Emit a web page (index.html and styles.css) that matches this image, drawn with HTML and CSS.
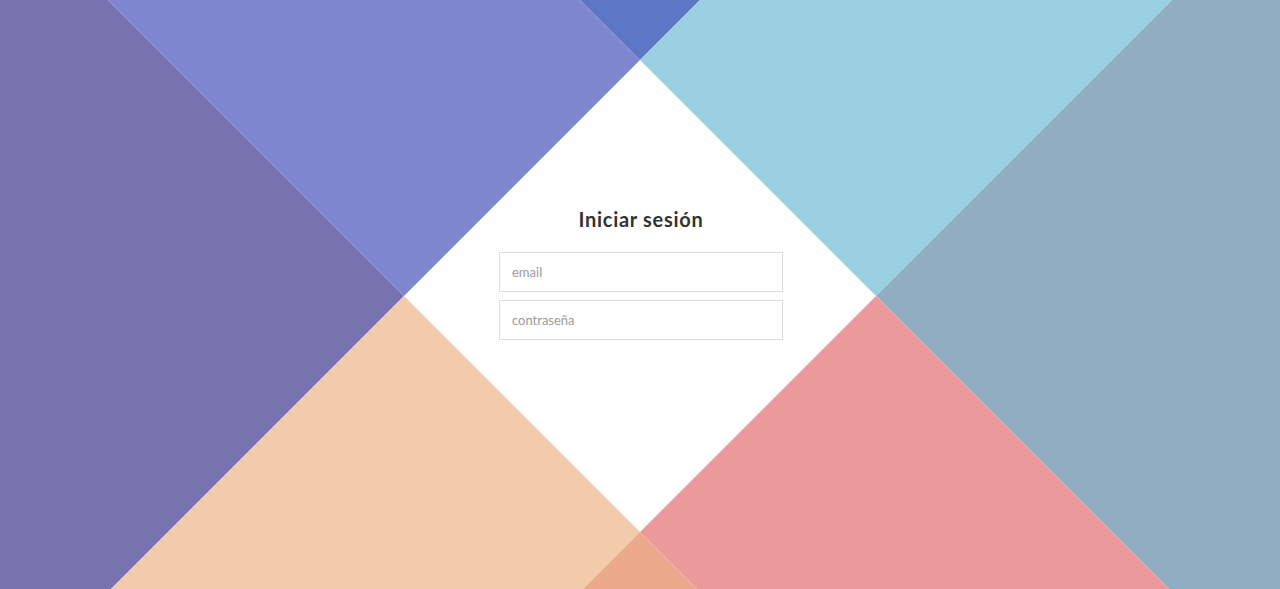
FILE: index.html
```html
<!DOCTYPE html>
<html lang="es">
<head>
<meta charset="utf-8">
<title>Iniciar sesión</title>
<link rel="stylesheet" href="styles.css">
</head>
<body>
<svg class="bg" viewBox="0 0 1280 589" preserveAspectRatio="none" aria-hidden="true">
  <polygon points="0,0 108,0 404,296 111,589 0,589" fill="#7872b0"/>
  <polygon points="108,0 580,0 640,60 404,296" fill="#7e86d0"/>
  <polygon points="580,0 700,0 640,60" fill="#5b77c5"/>
  <polygon points="700,0 1172,0 876,296 640,60" fill="#9ad0e2"/>
  <polygon points="1172,0 1280,0 1280,589 1169,589 876,296" fill="#91adc0"/>
  <polygon points="111,589 404,296 640,532 583,589" fill="#f2cbad"/>
  <polygon points="583,589 640,532 697,589" fill="#eba88a"/>
  <polygon points="697,589 640,532 876,296 1169,589" fill="#ec999c"/>
</svg>
<main class="page">
  <form class="login">
    <h1 class="title">Iniciar sesión</h1>
    <input class="field" type="email" placeholder="email">
    <input class="field" type="password" placeholder="contraseña">
  </form>
</main>
</body>
</html>
```
FILE: styles.css
```css
html, body {
  margin: 0;
  padding: 0;
  height: 100%;
  background: #ffffff;
  overflow: hidden;
}

body {
  font-family: "Lato", "Open Sans", sans-serif;
}

.bg {
  position: absolute;
  top: 0;
  left: 0;
  width: 100%;
  height: 100%;
  z-index: 0;
  display: block;
}

.page {
  position: relative;
  z-index: 1;
  display: flex;
  justify-content: center;
  padding-top: 207px;
  padding-left: 2px;
}

.login {
  width: 284px;
  display: flex;
  flex-direction: column;
  gap: 8px;
}

.title {
  margin: 0 0 13px;
  font-size: 20px;
  line-height: 24px;
  font-weight: 700;
  letter-spacing: 0.7px;
  color: #333333;
  text-align: center;
}

.field {
  box-sizing: border-box;
  width: 284px;
  height: 40px;
  margin: 0;
  padding: 0 12px;
  border: 1px solid #dcdcdc;
  border-radius: 0;
  background: #ffffff;
  font-family: "Lato", "Open Sans", sans-serif;
  font-size: 13px;
  font-weight: 400;
  color: #555555;
  outline: none;
}

.field::placeholder {
  color: #9a9a9a;
  opacity: 1;
}
```
